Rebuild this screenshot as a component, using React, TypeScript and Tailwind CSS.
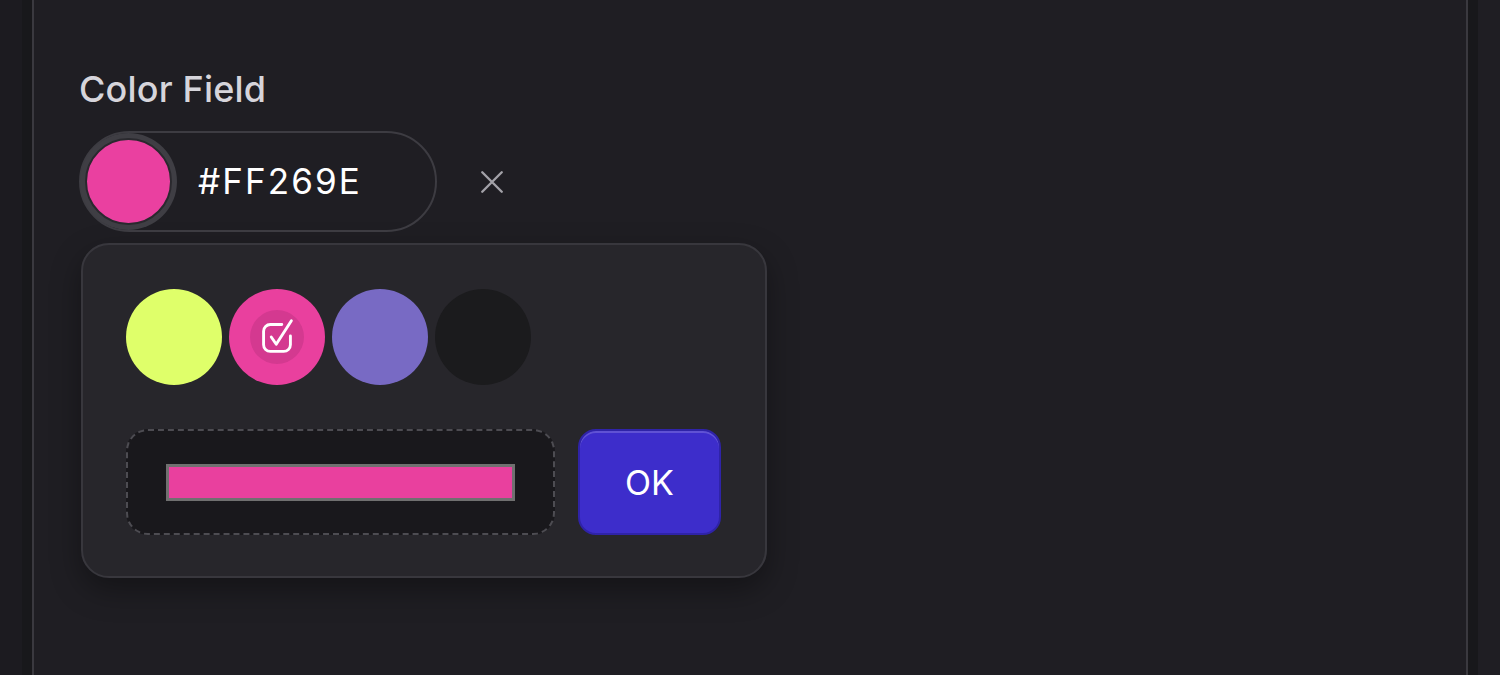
import React from 'react';

const swatches = ['#dfff6a', '#e9409e', '#786ac4', '#1b1b1d'];

function CheckIcon() {
  return (
    <svg width="46" height="46" viewBox="0 0 24 24" fill="none" stroke="white" strokeWidth="1.5" strokeLinecap="round" strokeLinejoin="round">
      <path d="M19 11.5V16a3.5 3.5 0 0 1-3.5 3.5h-7A3.5 3.5 0 0 1 5 16V9a3.5 3.5 0 0 1 3.5-3.5h6" />
      <path d="M9 12l2.6 3.8L19.5 3.5" />
    </svg>
  );
}

function App() {
  return (
    <div className="flex h-screen w-full overflow-hidden bg-[#1f1e23]" style={{ fontFamily: 'Inter, "Noto Sans", sans-serif' }}>
      <div className="w-[22px] shrink-0 bg-[#1c1b20]" />
      <div className="w-[10px] shrink-0 bg-[#18181b]" />
      <main className="flex-1 border-x-2 border-[#3a393f] bg-[#1f1e23] pl-[45px] pt-[69px]">
        <h2 className="text-[36px] font-medium leading-[40px] tracking-[0.005em] text-[#d6d5db]">Color Field</h2>

        <div className="mt-[22px] flex items-center">
          <div className="flex h-[101px] w-[358px] items-center rounded-full border-2 border-[#3d3c42]">
            <div className="ml-[-1px] flex h-[97px] w-[97px] items-center justify-center rounded-full bg-[#3f3e44]">
              <div className="h-[87px] w-[87px] rounded-full border-2 border-[#2a292e] bg-[#ea40a0]" />
            </div>
            <span className="ml-[21px] text-[35px] tracking-[0.06em] text-white">#FF269E</span>
          </div>
          <button className="ml-[40px] flex h-[30px] w-[30px] items-center justify-center text-[#a3a2a8]">
            <svg width="26" height="26" viewBox="0 0 24 24" fill="none" stroke="currentColor" strokeWidth="2.2" strokeLinecap="round">
              <path d="M3 3l18 18M21 3L3 21" />
            </svg>
          </button>
        </div>

        <div className="ml-[2px] mt-[11px] w-[686px] rounded-[28px] border-2 border-[#38373d] bg-[#27262b] px-[43px] pb-[41px] pt-[44px] shadow-[0_12px_30px_rgba(0,0,0,0.35)]">
          <div className="flex gap-[7px]">
            {swatches.map((c, i) => (
              <div key={c} className="flex h-[96px] w-[96px] items-center justify-center rounded-full" style={{ backgroundColor: c }}>
                {i === 1 && (
                  <div className="flex h-[54px] w-[54px] items-center justify-center rounded-full bg-[#d43990]">
                    <CheckIcon />
                  </div>
                )}
              </div>
            ))}
          </div>

          <div className="mt-[44px] flex items-center gap-[23px]">
            <div className="flex h-[106px] w-[429px] items-center justify-center rounded-[22px] border-2 border-dashed border-[#4d4c52] bg-[#19181c]">
              <div className="h-[37px] w-[349px] border-[3px] border-[#707070] bg-[#e9409e]" />
            </div>
            <button className="flex h-[106px] w-[143px] items-center justify-center rounded-[18px] border-2 border-[#2f23a8] bg-[#3d2dcb] text-[34px] text-white shadow-[inset_0_2px_0_rgba(255,255,255,0.18)]">
              OK
            </button>
          </div>
        </div>
      </main>
      <div className="w-[10px] shrink-0 bg-[#18181b]" />
      <div className="w-[22px] shrink-0 bg-[#1f1e23]" />
    </div>
  );
}

export default App;
